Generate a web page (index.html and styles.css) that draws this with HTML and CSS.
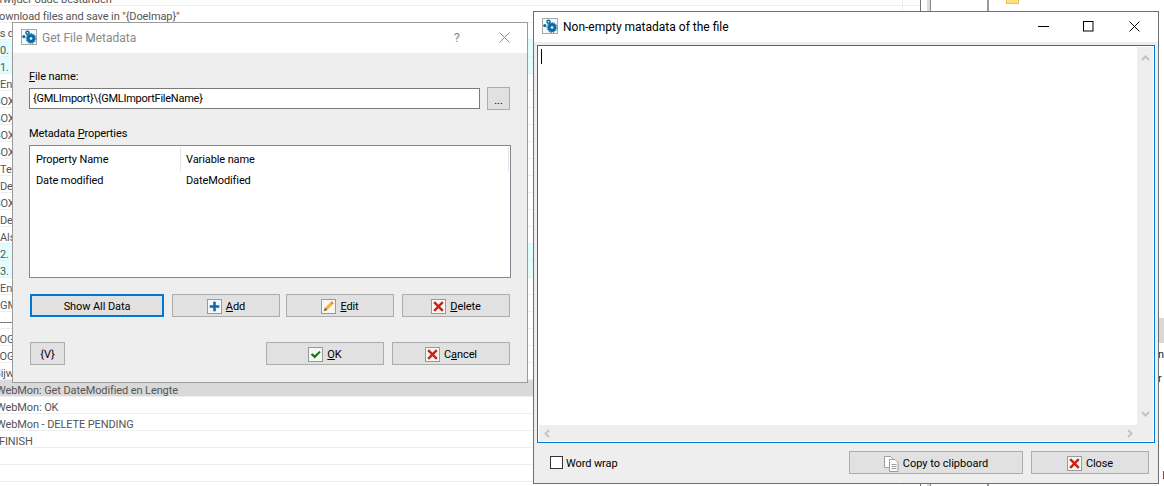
FILE: index.html
```html
<!DOCTYPE html>
<html lang="en">
<head>
  <meta charset="UTF-8">
  <meta name="viewport" content="width=device-width, initial-scale=1.0">
  <title>Get File Metadata</title>
  <link rel="stylesheet" href="styles.css">
</head>
<body>
  <svg class="defs" width="0" height="0">
    <symbol id="i-gears" viewBox="0 0 16 16">
      <rect x="0.5" y="0.5" width="15" height="15" fill="#f8fbfd" stroke="#a8a8a8"/>
      <circle cx="10" cy="9.500" r="4.500" fill="#0b6ba5"/>
      <circle cx="10" cy="9.500" r="5" fill="none" stroke="#0b6ba5" stroke-width="0.900" stroke-dasharray="1.500 1"/>
      <circle cx="10" cy="9.500" r="1.300" fill="#f8fbfd"/>
      <circle cx="6.500" cy="3.800" r="2.300" fill="#0b6ba5"/>
      <circle cx="6.500" cy="3.800" r="0.800" fill="#f8fbfd"/>
      <circle cx="2.800" cy="7.600" r="1.600" fill="#0b6ba5"/>
    </symbol>
    <symbol id="i-plus" viewBox="0 0 15 15">
      <path d="M6 2h3v4h4v3H9v4H6V9H2V6h4z" fill="#0a69b4"/>
    </symbol>
    <symbol id="i-pencil" viewBox="0 0 15 15">
      <path d="M2 13l1.500-4 6.500-6.500 2.500 2.500-6.500 6.500z" fill="#f2b32e"/>
      <path d="M10 2.500l2.500 2.500 1-1-2.500-2.500z" fill="#d8603a"/>
      <path d="M2 13l1.500-4 2.500 2.500z" fill="#7d5a3a"/>
    </symbol>
    <symbol id="i-cross" viewBox="0 0 15 15">
      <path d="M2.500 2.500l10 10M12.500 2.500l-10 10" fill="none" stroke="#cc2211" stroke-width="2.800"/>
    </symbol>
    <symbol id="i-check" viewBox="0 0 15 15">
      <path d="M2 7.500l2-1.500 2.500 2.500 5.500-5 1.500 1.500-7 7z" fill="#0f7a12"/>
    </symbol>
    <symbol id="i-copy" viewBox="0 0 15 17">
      <path d="M0.500 1.500h6l2 2v9h-8z" fill="#fff" stroke="#9d9d9d"/>
      <path d="M5.500 4.500h5.500l3 3v9h-8.500z" fill="#fff" stroke="#9d9d9d"/>
      <path d="M7.500 9.500h5M7.500 11.500h5M7.500 13.500h5" stroke="#9d9d9d" fill="none"/>
    </symbol>
  </svg>

  <div class="desk">
    <div class="rows">
      <div class="row cut-lg">Verwijder oude bestanden</div>
      <div class="row cut-md">Download files and save in "{Doelmap}"</div>
      <div class="row cut-al">Als dit</div>
      <div class="row cyan">0. Stap</div>
      <div class="row cyan">1. Stap</div>
      <div class="row">End</div>
      <div class="row cut-nm">SOX</div>
      <div class="row cut-nm">SOX</div>
      <div class="row cut-nm">SOX</div>
      <div class="row cut-nm">SOX</div>
      <div class="row">Tel</div>
      <div class="row">Delay</div>
      <div class="row cut-nm">SOX</div>
      <div class="row">Delay</div>
      <div class="row">Als</div>
      <div class="row cyan">2. Stap</div>
      <div class="row cyan">3. Stap</div>
      <div class="row">End</div>
      <div class="row">GML</div>
      <div class="row">--------</div>
      <div class="row cut-nm">LOG</div>
      <div class="row cut-nm">LOG</div>
      <div class="row cut-nm">Bijw</div>
      <div class="row selected cut-sm">WebMon: Get DateModified en Lengte</div>
      <div class="row cut-sm">WebMon: OK</div>
      <div class="row cut-sm">WebMon - DELETE PENDING</div>
      <div class="row cut-xs">FINISH</div>
      <div class="row"></div>
      <div class="row"></div>
      <div class="row"></div>
    </div>
    <div class="gutter"></div>
    <div class="tree">
      <div class="folder"></div>
      <div class="tree-selected"></div>
      <div class="tree-label">n</div>
      <div class="tree-label">r</div>
      <div class="tree-mark"></div>
    </div>
  </div>

  <!-- window behind: inactive dialog -->
  <div class="window dialog">
    <div class="titlebar">
      <svg class="app-icon"><use href="#i-gears"/></svg>
      <span class="title">Get File Metadata</span>
      <span class="help">?</span>
      <svg class="win-close" viewBox="0 0 11 11"><path d="M0.500 0.500l10 10M10.500 0.500l-10 10" stroke="#8c8c8c" fill="none"/></svg>
    </div>
    <div class="dialog-body">
      <label class="field-label"><u>F</u>ile name:</label>
      <div class="file-row">
        <div class="input">{GMLImport}\{GMLImportFileName}</div>
        <button class="btn dots">...</button>
      </div>
      <div class="group-label">Metadata <u>P</u>roperties</div>
      <div class="prop-list">
        <div class="prop-head">
          <div class="col-a">Property Name</div>
          <div class="col-b">Variable name</div>
        </div>
        <div class="prop-row">
          <div class="col-a">Date modified</div>
          <div class="col-b">DateModified</div>
        </div>
      </div>
      <div class="actions">
        <button class="btn show-all">Show All Data</button>
        <button class="btn action"><span class="ico"><svg><use href="#i-plus"/></svg></span><span><u>A</u>dd</span></button>
        <button class="btn action edit"><span class="ico"><svg><use href="#i-pencil"/></svg></span><span><u>E</u>dit</span></button>
        <button class="btn action"><span class="ico"><svg><use href="#i-cross"/></svg></span><span><u>D</u>elete</span></button>
      </div>
      <div class="footer">
        <button class="btn vars">{V}</button>
        <button class="btn wide"><span class="ico"><svg><use href="#i-check"/></svg></span><span><u>O</u>K</span></button>
        <button class="btn wide"><span class="ico"><svg><use href="#i-cross"/></svg></span><span>C<u>a</u>ncel</span></button>
      </div>
    </div>
  </div>

  <!-- active window -->
  <div class="window viewer">
    <div class="titlebar">
      <svg class="app-icon"><use href="#i-gears"/></svg>
      <span class="title">Non-empty matadata of the file</span>
      <svg class="win-min" viewBox="0 0 11 1"><path d="M0 0.500h11" stroke="#000"/></svg>
      <svg class="win-max" viewBox="0 0 11 11"><rect x="0.500" y="0.500" width="9.500" height="9.500" fill="none" stroke="#000"/></svg>
      <svg class="win-x" viewBox="0 0 11 11"><path d="M0.500 0.500l10 10M10.500 0.500l-10 10" stroke="#000" fill="none"/></svg>
    </div>
    <div class="viewer-body">
      <div class="memo">
        <div class="memo-text"><span class="caret"></span></div>
        <div class="scroll-v">
          <svg viewBox="0 0 9 6"><path d="M1 5l3.500-3.500L8 5" fill="none" stroke="#c4c4c4" stroke-width="2"/></svg>
          <svg viewBox="0 0 9 6"><path d="M1 1l3.500 3.500L8 1" fill="none" stroke="#c4c4c4" stroke-width="2"/></svg>
        </div>
        <div class="scroll-h">
          <svg viewBox="0 0 6 9"><path d="M5 1L1.500 4.500 5 8" fill="none" stroke="#c4c4c4" stroke-width="2"/></svg>
          <svg viewBox="0 0 6 9"><path d="M1 1l3.500 3.500L1 8" fill="none" stroke="#c4c4c4" stroke-width="2"/></svg>
        </div>
      </div>
      <div class="viewer-footer">
        <span class="checkbox"></span>
        <span class="wrap-label">Word wrap</span>
        <button class="btn copy"><svg class="copy-icon"><use href="#i-copy"/></svg><span>Copy to clipboard</span></button>
        <button class="btn wide"><span class="ico"><svg><use href="#i-cross"/></svg></span><span>Close</span></button>
      </div>
    </div>
  </div>
</body>
</html>
```

FILE: styles.css
```css
:root {
  --text-font: Roboto, "Noto Sans", sans-serif;
  --panel: #eeeeee;
  --btn-face: #e1e1e1;
  --btn-line: #adadad;
  --focus: #0078d7;
}

* {
  box-sizing: border-box;
}

body {
  margin: 0;
  width: 1164px;
  height: 486px;
  overflow: hidden;
  position: relative;
  background: #fff;
  font-family: var(--text-font);
  font-size: 11px;
  letter-spacing: -0.1px;
  color: #000;
}

.defs {
  position: absolute;
}

/* the application behind the two windows */
.desk {
  display: flex;
  height: 486px;
  overflow: hidden;
}

.rows {
  width: 920px;
  margin-top: -11px;
  flex-shrink: 0;
}

.row {
  height: 17px;
  line-height: 21px;
  border-bottom: 1px solid #eeeeee;
  color: #555;
  white-space: nowrap;
  background-image: linear-gradient(#eee, #eee);
  background-size: 1px 100%;
  background-position: 902px 0;
  background-repeat: no-repeat;
}

.row.cyan {
  background-color: #e2fdfd;
}

.row.selected {
  background-color: #d9d9d9;
}

.cut-xs { text-indent: -1px; }
.cut-sm { text-indent: -4px; }
.cut-nm { text-indent: -6px; }
.cut-md { text-indent: -8px; }
.cut-al { text-indent: -10px; }
.cut-lg { text-indent: -13px; }

.gutter {
  width: 11px;
  flex-shrink: 0;
  border-left: 1px solid #777;
  border-right: 1px solid #888;
  background: linear-gradient(#dcdcdc, #dcdcdc) 6px 0 / 3px 100% no-repeat;
}

.tree {
  flex: 1;
  border-left: 2px solid #999;
  margin-left: 56px;
  padding-left: 17px;
}

.folder {
  width: 13px;
  height: 4px;
  background: #ffdf80;
  border: 1px solid #edc24a;
  border-top: 0;
}

.tree-selected {
  height: 25px;
  margin: 314px -20px 0 -19px;
  background: #d9d9d9;
}

.tree-label {
  height: 24px;
  padding: 4px 0 0 152px;
  line-height: 16px;
  color: #222;
}

.tree-mark {
  width: 2px;
  height: 8px;
  margin: 80px 0 0 157px;
  background: #7a4a3a;
}

/* windows */
.window {
  position: absolute;
  display: flex;
  flex-direction: column;
  background: var(--panel);
  border: 1px solid #6f6f6f;
}

.dialog {
  left: 12px;
  top: 22px;
  width: 516px;
  height: 361px;
  border-color: #9b9b9b;
}

.viewer {
  left: 533px;
  top: 11px;
  width: 626px;
  height: 473px;
}

.titlebar {
  height: 30px;
  flex-shrink: 0;
  display: flex;
  align-items: center;
  background: #fff;
  padding: 0 0 2px 8px;
  font-size: 12px;
  letter-spacing: 0;
}

.title {
  margin-top: 2px;
}

.app-icon {
  width: 16px;
  height: 16px;
  margin-right: 5px;
}

.dialog .title {
  color: #8a8a8a;
}

.help {
  margin-left: auto;
  color: #8a8a8a;
  font-size: 13px;
}

.win-close {
  width: 11px;
  height: 11px;
  margin: 0 17px 0 39px;
}

.win-min {
  width: 11px;
  height: 1px;
  margin-left: auto;
}

.win-max {
  width: 11px;
  height: 11px;
  margin-left: 34px;
}

.win-x {
  width: 11px;
  height: 11px;
  margin: 0 18px 0 35px;
}

/* dialog content */
.dialog-body {
  flex: 1;
  display: flex;
  flex-direction: column;
  padding: 15px 16px 0;
}

.field-label, .group-label {
  display: block;
  height: 16px;
  line-height: 18px;
}

.file-row {
  display: flex;
  align-items: center;
  gap: 7px;
  margin: 3px 1px 0 0;
  height: 23px;
}

.input {
  flex: 1;
  height: 21px;
  line-height: 19px;
  padding-left: 3px;
  letter-spacing: -0.25px;
  background: #fff;
  border: 1px solid #7a7a7a;
}

.group-label {
  margin-top: 15px;
}

.prop-list {
  height: 133px;
  margin-top: 4px;
  padding-top: 1px;
  background: #fff;
  border: 1px solid #828790;
}

.prop-head, .prop-row {
  display: flex;
}

.prop-head {
  height: 24px;
  line-height: 26px;
  margin-bottom: 1px;
}

.prop-head .col-a, .prop-head .col-b {
  border-right: 1px solid #e5e5e5;
}

.prop-head .col-b {
  margin-right: 1px;
}

.prop-row {
  height: 21px;
  line-height: 17px;
}

.col-a {
  width: 151px;
  padding-left: 6px;
}

.col-b {
  flex: 1;
  padding-left: 5px;
}

.btn {
  display: flex;
  align-items: center;
  justify-content: center;
  gap: 4px;
  height: 23px;
  padding: 2px 0 0;
  font: inherit;
  letter-spacing: inherit;
  color: #000;
  background: var(--btn-face);
  border: 1px solid var(--btn-line);
}

.dots {
  width: 23px;
  padding-top: 3px;
}

.actions {
  display: flex;
  gap: 8px;
  margin: 16px 1px 0 1px;
}

.show-all {
  width: 134px;
  border: 2px solid var(--focus);
}

.action {
  width: 108px;
}

.action.edit {
  margin-left: -2px;
}

.footer {
  display: flex;
  gap: 8px;
  margin: 25px 1px 0 1px;
}

.vars {
  width: 35px;
  margin-right: auto;
}

.wide {
  width: 118px;
}

.ico {
  display: block;
  width: 15px;
  height: 15px;
  background: #f6f6f6;
  border: 1px solid #9a9a9a;
}

.ico svg {
  display: block;
  width: 13px;
  height: 13px;
}

/* viewer content */
.viewer-body {
  flex: 1;
  display: flex;
  flex-direction: column;
  padding: 3px 3px 0;
}

.memo {
  height: 398px;
  display: grid;
  grid-template-columns: 1fr 16px;
  grid-template-rows: 1fr 16px;
  padding: 1px;
  background: #fff;
  border: 1px solid var(--focus);
}

.memo-text {
  padding: 2px 0 0 2px;
  background: #fff;
}

.caret {
  display: block;
  width: 1px;
  height: 15px;
  background: #000;
}

.scroll-v, .scroll-h {
  display: flex;
  justify-content: space-between;
  align-items: center;
  background: var(--panel);
}

.scroll-v {
  flex-direction: column;
  padding: 8px 0;
}

.scroll-v svg {
  width: 9px;
  height: 6px;
}

.scroll-h {
  grid-column: 1 / 3;
  padding: 0 20px 0 5px;
}

.scroll-h svg {
  width: 6px;
  height: 9px;
}

.viewer-footer {
  display: flex;
  align-items: center;
  gap: 8px;
  margin-top: 8px;
  padding: 0 6px 0 13px;
}

.checkbox {
  width: 13px;
  height: 13px;
  background: #fff;
  border: 1px solid #333;
}

.wrap-label {
  margin: 2px auto 0 -5px;
}

.copy {
  width: 174px;
  letter-spacing: 0;
}

.copy-icon {
  width: 15px;
  height: 17px;
}
```
